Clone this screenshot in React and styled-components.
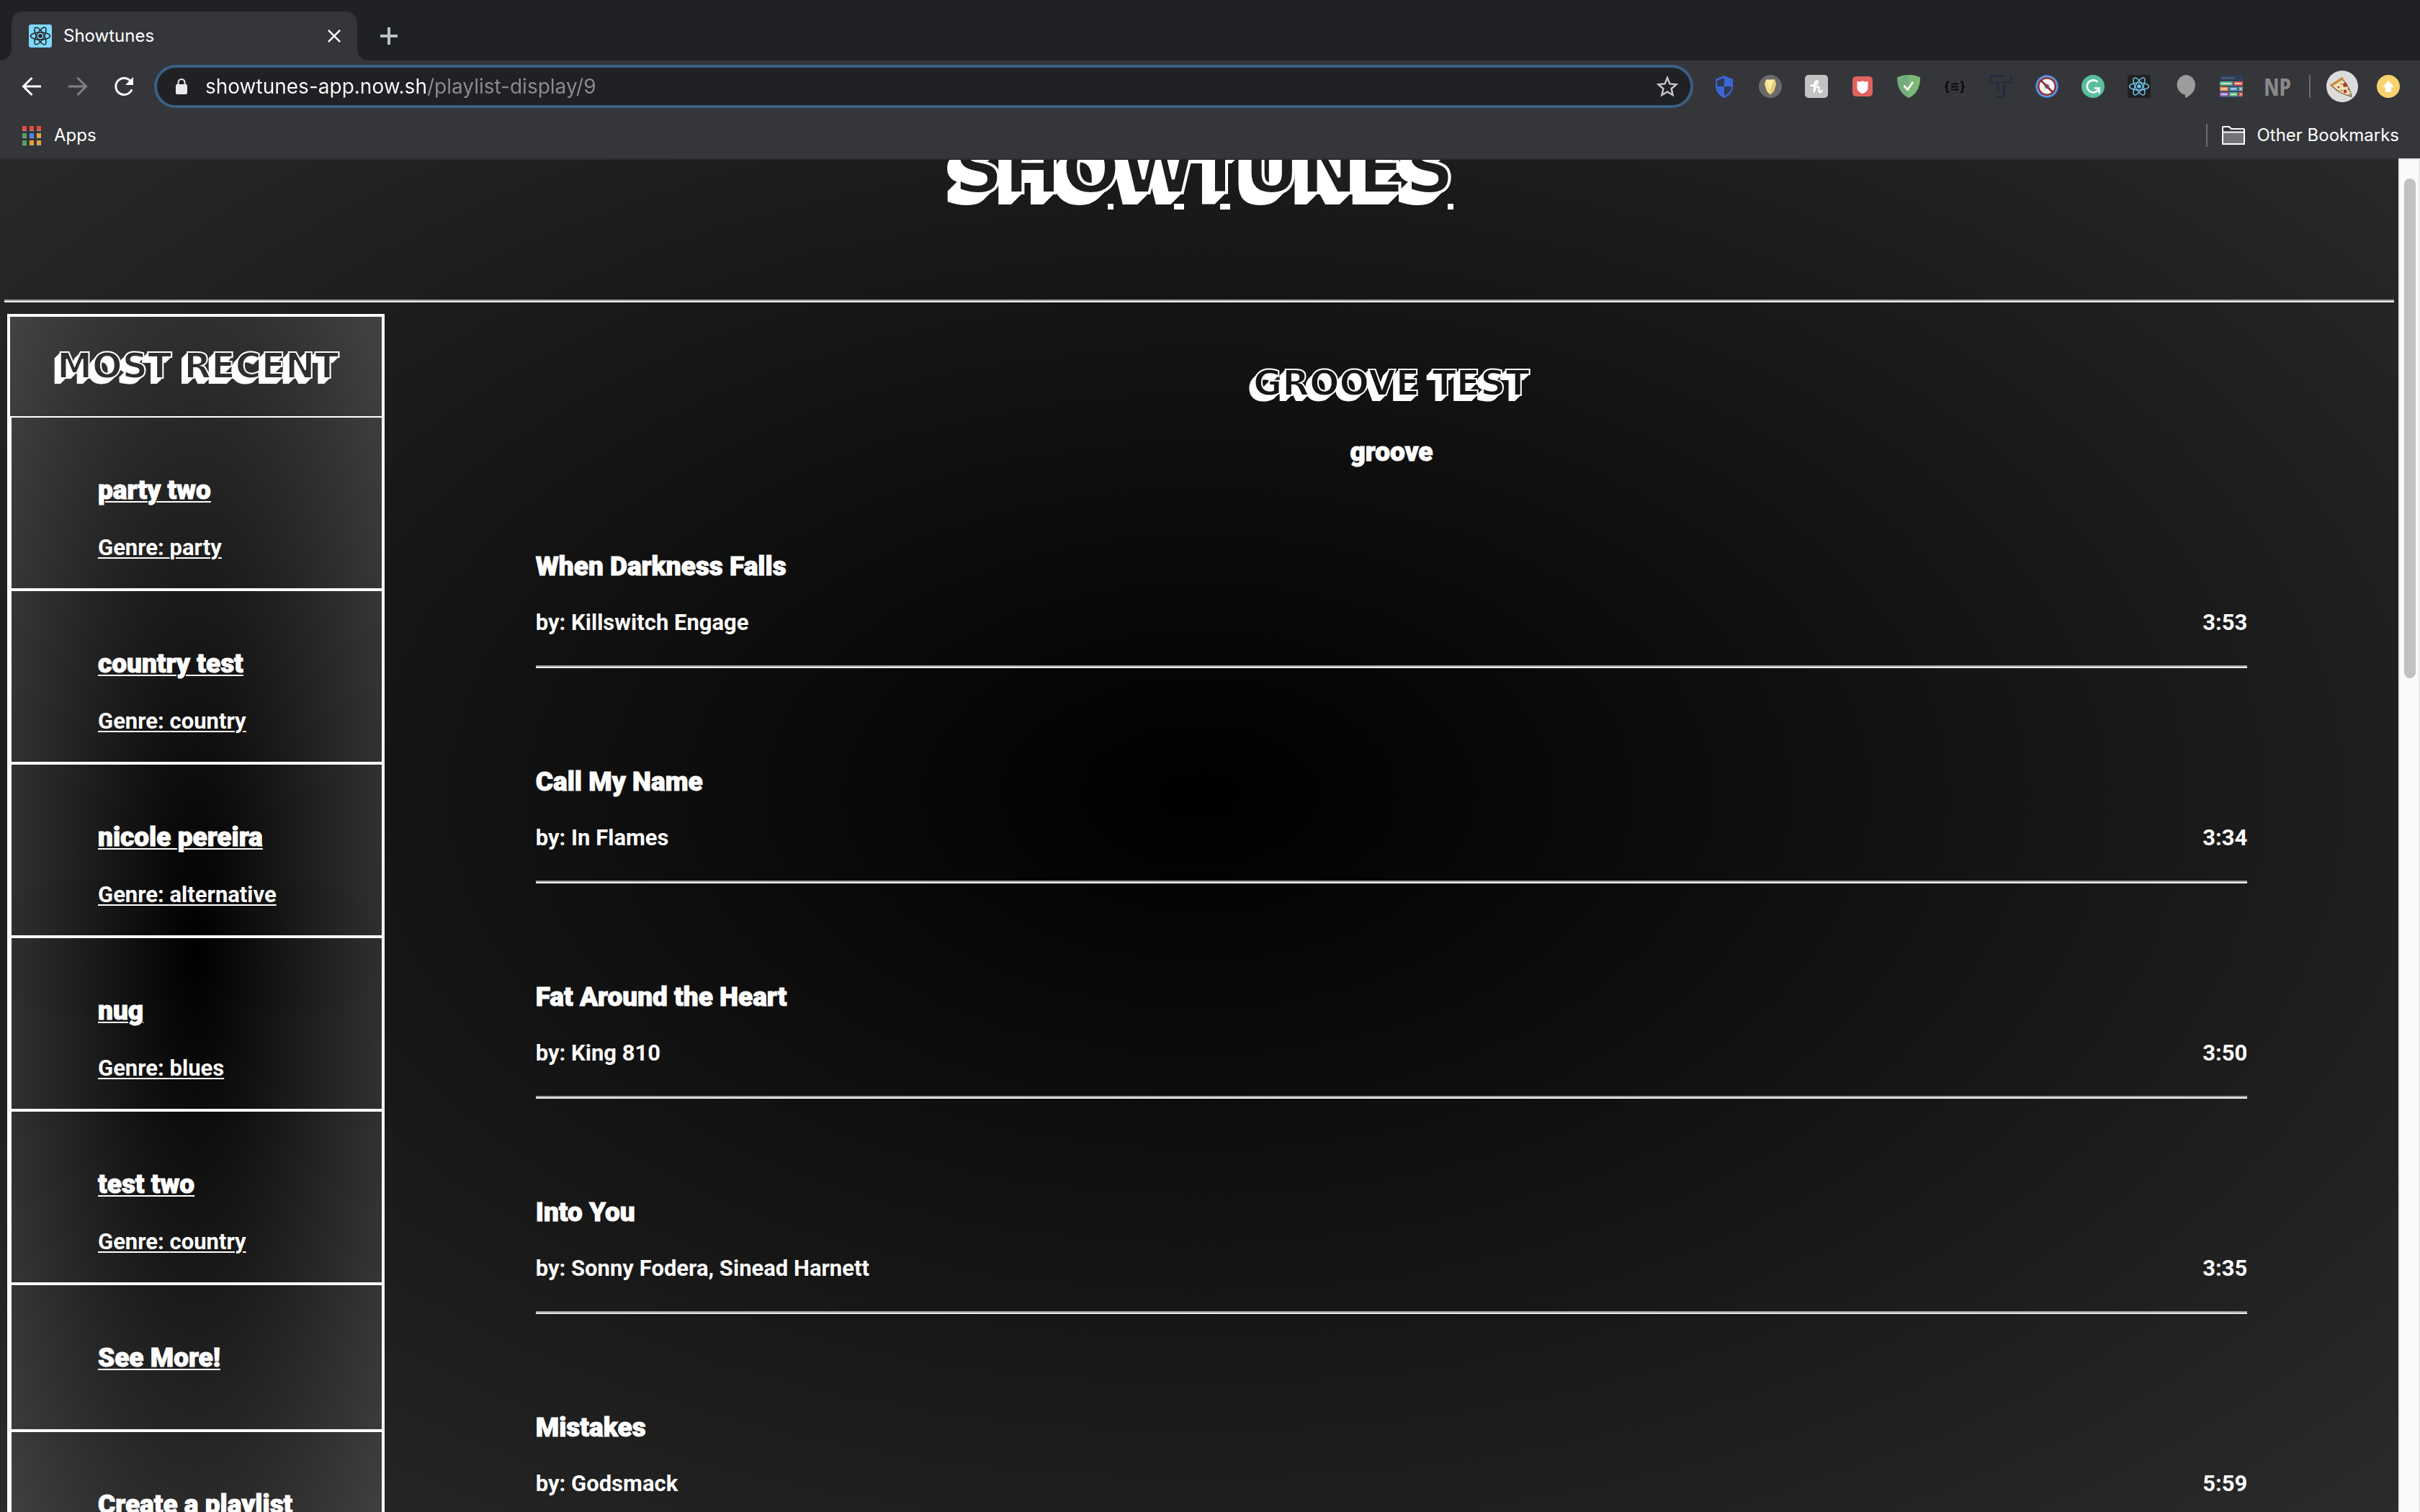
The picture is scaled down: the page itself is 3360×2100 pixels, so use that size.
import React from "react";
import styled, { createGlobalStyle } from "styled-components";

const Global = createGlobalStyle`
  *, *::before, *::after { box-sizing: border-box; }
  body { margin: 0; background: #202124; }
  h1, h2, h3, h4, p, ul { margin: 0; padding: 0; }
  ul { list-style: none; }
  button { border: 0; padding: 0; background: none; font: inherit; color: inherit; }
`;

const Window = styled.div`
  height: 100vh;
  display: flex;
  flex-direction: column;
  overflow: hidden;
  font-family: Inter, "Liberation Sans", sans-serif;
  color: #fff;
`;

/* ---------- browser chrome ---------- */

const TabStrip = styled.div`
  display: flex;
  align-items: flex-end;
  height: 84px;
  padding-left: 16px;
  background: #202124;
`;

const Tab = styled.div`
  position: relative;
  display: flex;
  align-items: center;
  gap: 16px;
  width: 480px;
  height: 68px;
  padding: 0 22px 0 24px;
  border-radius: 16px 16px 0 0;
  background: #35363a;
  font-size: 24px;
  line-height: 32px;

  &::before,
  &::after {
    content: "";
    position: absolute;
    bottom: 0;
    width: 16px;
    height: 16px;
  }
  &::before {
    left: -16px;
    background: radial-gradient(circle at 0 0, transparent 16px, #35363a 16px);
  }
  &::after {
    right: -16px;
    background: radial-gradient(circle at 100% 0, transparent 16px, #35363a 16px);
  }
`;

const TabTitle = styled.span`
  flex: 1;
`;

const IconButton = styled.button`
  display: flex;
  align-items: center;
  justify-content: center;
  flex: none;
  width: ${(p) => p.$w || 32}px;
  height: ${(p) => p.$h || 32}px;
  color: ${(p) => p.$color || "#fff"};
`;

const NewTab = styled(IconButton)`
  width: 88px;
  height: 68px;
`;

const Toolbar = styled.div`
  display: flex;
  align-items: center;
  height: 72px;
  padding: 0 28px;
  background: #35363a;
`;

const NavButtons = styled.div`
  display: flex;
  gap: 32px;
  margin-right: 26px;
`;

const Omnibox = styled.div`
  flex: 1;
  display: flex;
  align-items: center;
  height: 60px;
  padding: 0 16px 0 25px;
  border: 4px solid #3a5f82;
  border-radius: 30px;
  background: #202124;
`;

const Address = styled.input`
  flex: 1;
  min-width: 0;
  height: 44px;
  margin-left: 24px;
  padding: 0;
  border: 0;
  outline: 0;
  font: 400 28px/44px Inter, "Liberation Sans", sans-serif;
  color: transparent;
  background: linear-gradient(90deg, #fff 308px, #8c8d90 308px);
  background-clip: text;
  -webkit-background-clip: text;
`;

const Extensions = styled.div`
  display: flex;
  align-items: center;
  gap: 32px;
  margin-left: 27px;
`;

const Badge = styled.span`
  color: ${(p) => p.$color};
  font: 700 34px/32px "Liberation Sans Narrow", "Open Sans Condensed", sans-serif;
`;

const Divider = styled.span`
  width: 2px;
  height: 32px;
  background: #6b6c70;
`;

const Profile = styled.div`
  display: flex;
  align-items: center;
  gap: 26px;
  margin-left: 22px;
`;

const ExtensionsEnd = styled(Divider)`
  margin-left: 28px;
`;

const Bookmarks = styled.div`
  display: flex;
  align-items: center;
  justify-content: space-between;
  height: 64px;
  padding: 0 29px 0 31px;
  background: #35363a;
  font-size: 24px;
  line-height: 32px;
`;

const Bookmark = styled.button`
  display: flex;
  align-items: center;
  gap: ${(p) => p.$gap}px;
`;

const OtherBookmarks = styled.div`
  display: flex;
  align-items: center;
  gap: 20px;
`;

/* ---------- page ---------- */

const Viewport = styled.div`
  flex: 1;
  min-height: 0;
  display: flex;
  overflow: hidden;
`;

const Page = styled.div`
  flex: 1;
  min-width: 0;
  overflow: hidden;
  border-top: 2px solid #2b2b2b;
  background: radial-gradient(at 50% 47%, #000, #2b2b2b);
  font-family: Roboto, "Liberation Sans", sans-serif;
`;

const ScrollTrack = styled.div`
  flex: none;
  width: 30px;
  padding: 26px 4px 0 6px;
  border: solid #e8e8e8;
  border-width: 2px 2px 0 2px;
  background: #fafafa;
`;

const ScrollThumb = styled.div`
  width: 16px;
  height: 694px;
  border-radius: 8px;
  background: #c1c1c1;
`;

const Header = styled.header`
  display: flex;
  flex-direction: column;
  align-items: center;
  justify-content: flex-end;
  height: 194px;
  padding-bottom: 125px;
  overflow: hidden;
`;

const steps = (n) =>
  Array.from({ length: n }, (_, i) => `-${i + 1}px ${i + 1}px 0 #fff`).join(", ");

/* The underline only shows as short dashes between the shaded letters. */
const dash = (x, w) => `linear-gradient(#fff, #fff) ${x}px 100% / ${w}px 8px no-repeat`;

const SiteTitle = styled.h1`
  padding: 0 0 0 14px;
  font: 700 96px/112px "DejaVu Sans", sans-serif;
  color: #1d1d1d;
  -webkit-text-stroke: 4px #fff;
  text-shadow: ${steps(16)};
  white-space: nowrap;
  background: ${dash(228, 8)}, ${dash(320, 14)}, ${dash(384, 14)}, ${dash(700, 8)};
`;

const Rule = styled.hr`
  height: 4px;
  margin: 0 ${(p) => p.$inset || 0}px;
  border: 0;
  border-top: 2px solid #9a9a9a;
  border-bottom: 2px solid #eee;
`;

const Columns = styled.div`
  display: flex;
  align-items: flex-start;
  padding: 16px 0 0 10px;
`;

const Sidebar = styled.nav`
  flex: none;
  width: 524px;
  border: 4px solid #fff;
  background: radial-gradient(#000, #434343);
`;

const ShadeHeading = styled.h2`
  font: 700 49px/56px "DejaVu Sans", sans-serif;
  color: ${(p) => p.$face};
  -webkit-text-stroke: 2px #fff;
  text-shadow: ${steps(8)};
  text-align: center;
  white-space: nowrap;
`;

const SidebarHead = styled.div`
  padding: 41px 0 41px 6px;
  border-bottom: 2px solid #fff;
`;

const Card = styled.a`
  display: block;
  padding: 79px 16px ${(p) => (p.$single ? 77 : 37)}px 120px;
  border-left: 2px solid #fff;
  border-bottom: 4px solid #fff;
  color: #fff;
  text-decoration: none;
`;

const Name = styled.h3`
  font-size: 37px;
  line-height: 44px;
  font-weight: 900;
  -webkit-text-stroke: 1px #fff;
  text-decoration: ${(p) => (p.$link ? "underline 2px" : "none")};
  text-underline-offset: 3px;
`;

const Detail = styled.p`
  margin-top: ${(p) => (p.$link ? 40 : 38)}px;
  margin-bottom: ${(p) => (p.$link ? 1 : 0)}px;
  display: flex;
  justify-content: space-between;
  font-size: 31px;
  line-height: 36px;
  font-weight: 700;
  text-decoration: ${(p) => (p.$link ? "underline 2px" : "none")};
  text-underline-offset: 3px;
`;

const Main = styled.main`
  flex: 1;
  padding-top: 69px;
`;

const Genre = styled(Name)`
  margin-top: 45px;
  text-align: center;
`;

const Songs = styled.ul`
  width: 85%;
  margin: 115px auto 0;
`;

const Song = styled.li`
  margin-bottom: 136px;

  ${Rule} {
    margin-top: 41px;
  }
`;

/* ---------- icons ---------- */

const Atom = ({ size = 32, bg, stroke, r = 3 }) => (
  <svg width={size} height={size} viewBox="0 0 32 32">
    <rect width="32" height="32" rx={r} fill={bg} />
    <g fill="none" stroke={stroke} strokeWidth="1.5">
      <ellipse cx="16" cy="16" rx="13.5" ry="5" />
      <ellipse cx="16" cy="16" rx="13.5" ry="5" transform="rotate(60 16 16)" />
      <ellipse cx="16" cy="16" rx="13.5" ry="5" transform="rotate(120 16 16)" />
    </g>
    <circle cx="16" cy="16" r="2.7" fill={stroke} />
  </svg>
);

const Stroke = ({ d, size = 32, w = 3, children }) => (
  <svg width={size} height={size} viewBox="0 0 32 32" fill="none" stroke="currentColor" strokeWidth={w}>
    {d && <path d={d} />}
    {children}
  </svg>
);

const Reload = () => (
  <Stroke>
    <path d="M27 20.2A11.500 11.500 0 1 1 25 8.500" />
    <path d="M29 3v11H18z" fill="currentColor" stroke="none" />
  </Stroke>
);

const Lock = () => (
  <svg width="18" height="22" viewBox="0 0 18 22">
    <rect x="1" y="8" width="16" height="14" rx="2" fill="#e8eaed" />
    <path d="M4.500 9V5.500a4.500 4.500 0 0 1 9 0V9" fill="none" stroke="#e8eaed" strokeWidth="2" />
  </svg>
);

const Star = () => (
  <svg width="32" height="32" viewBox="0 0 32 32">
    <path d="M16 4l3.400 8.400 9 .8-6.800 6 2 8.800L16 23.400 8.400 28l2-8.800-6.800-6 9-.8z" fill="none" stroke="#c4c5c7" strokeWidth="2.500" />
  </svg>
);

const BlueShield = () => (
  <svg width="32" height="32" viewBox="0 0 32 32">
    <path d="M16 1l12 5v10c0 7-5 13-12 16C9 29 4 23 4 16V6z" fill="#3b67d6" />
    <path d="M16 4v12H6V8zM16 16h10c0 6-4 10.500-10 13z" fill="#303a52" />
  </svg>
);

const Bulb = () => (
  <svg width="32" height="32" viewBox="0 0 32 32">
    <circle cx="16" cy="16" r="16" fill="#6a6a6a" />
    <path d="M10 6.500h12l2 6-3 10-5 5-5-5-3-10z" fill="#f6e08b" />
    <path d="M16 6.500h6l2 6-3 10-5 5z" fill="#e3cb78" />
    <path d="M11 7l5 14 5-14z" fill="#fbeeae" />
  </svg>
);

const HoneyBadge = () => (
  <svg width="32" height="32" viewBox="0 0 32 32">
    <rect width="32" height="32" rx="5" fill="#c3c3c3" />
    <path d="M8.500 15c5 0 10-2.500 9.500-5.500-.5-2-4-1.500-4.500 3L12.500 24.500c1-5.500 3-8.500 5.500-8.500 3.500 0-.5 8 2.500 8 1.500 0 2.500-.8 3-2" fill="none" stroke="#fff" strokeWidth="2.300" strokeLinecap="round" />
  </svg>
);

const RedShield = () => (
  <svg width="32" height="32" viewBox="0 0 32 32">
    <rect x="2" y="2" width="28" height="28" rx="5" fill="#e0625f" />
    <path d="M8.500 9c3 .8 5.500.5 7.500-.8 2 1.300 4.500 1.600 7.500.8v9c0 4-3.500 6.500-7.500 8-4-1.500-7.500-4-7.500-8z" fill="#fff" />
  </svg>
);

const GreenShield = () => (
  <svg width="32" height="32" viewBox="0 0 32 32">
    <path d="M16 0c5 0 11 1 16 3.500C32 17 27 26.500 16 32 5 26.500 0 17 0 3.500 5 1 11 0 16 0z" fill="#74ac7c" />
    <path d="M16 0c5 0 11 1 16 3.500C32 17 27 26.500 16 32z" fill="#7cb975" />
    <path d="M9.500 15l5 5.500L22 10" fill="none" stroke="#fff" strokeWidth="2.800" />
  </svg>
);

const Braces = () => (
  <svg width="32" height="32" viewBox="0 0 32 32" fill="none" stroke="#050505" strokeWidth="2">
    <path d="M8 9.500H7q-2 0-2 2V14q0 2-2 2.500 2 .5 2 2.500v3q0 2 2 2h1M24 9.500h1q2 0 2 2V14q0 2 2 2.500-2 .5-2 2.500v3q0 2-2 2h-1" />
    <path d="M11 12.500h10M11 16.500h10M11 20.500h10" strokeWidth="1.500" />
    <path d="M18 11v3M14 15v3M18 19v3" strokeWidth="1.500" />
  </svg>
);

const TeeLogo = () => (
  <svg width="32" height="32" viewBox="0 0 32 32" fill="none" stroke="#222c40" strokeWidth="2.400">
    <path d="M23 1.200H1.200v10h11v12M30.800 0v10H20v20.800H10M9 11.200" />
    <path d="M30.800 10.800H22v20M16 8v2" strokeWidth="1" />
  </svg>
);

const Blocked = () => (
  <svg width="32" height="32" viewBox="0 0 32 32">
    <circle cx="16" cy="16" r="14.500" fill="#fff" stroke="#4a90e8" strokeWidth="2.500" />
    <circle cx="16" cy="16" r="11.800" fill="#f3f3f3" stroke="#8c2b2f" strokeWidth="2.500" />
    <circle cx="16" cy="16" r="3.500" fill="#8b9099" />
    <path d="M7.500 7.500l17 17" stroke="#8c2b2f" strokeWidth="2.500" />
  </svg>
);

const GreenSwirl = () => (
  <svg width="32" height="32" viewBox="0 0 32 32">
    <circle cx="16" cy="16" r="16" fill="#5abf9c" />
    <path d="M22.500 10A8.500 8.500 0 1 0 24 19.500" fill="none" stroke="#fff" strokeWidth="2.600" />
    <path d="M17.500 18.500h7.200v7" fill="none" stroke="#fff" strokeWidth="2.600" />
  </svg>
);

const Speech = () => (
  <svg width="32" height="32" viewBox="0 0 32 32">
    <path d="M16 0a14 14 0 0 1 14 14c0 8-6 15-14 18v-4.500A14 14 0 0 1 16 0z" fill="#9c9c9c" />
  </svg>
);

const ROWS = [
  [["#5fae80", 0, 18], ["#d15b52", 19, 13]],
  [["#e08c4a", 0, 12], ["#4f87bb", 13, 12], ["#8795a5", 26, 6]],
  [["#9167b8", 0, 12], ["#5fae80", 13, 12], ["#d15b52", 26, 6]],
];

const Blocks = () => (
  <svg width="32" height="32" viewBox="0 0 32 32">
    <rect width="32" height="32" fill="#2d3e5b" />
    <path d="M2 4.500h18" stroke="#566074" strokeWidth="2" />
    {ROWS.map((row, i) =>
      row.map(([c, x, w]) => (
        <g key={`${i}-${x}`}>
          <rect x={x} y={9 + i * 7.5} width={w} height="6" fill={c} />
          <rect x={x + 2} y={11 + i * 7.5} width={w - 4} height="2" fill="#fff" opacity=".65" />
        </g>
      ))
    )}
  </svg>
);

const Pizza = () => (
  <svg width="44" height="44" viewBox="0 0 44 44">
    <circle cx="22" cy="22" r="22" fill="#dcdcdc" />
    <path d="M7 20L21 11c7 6 12 16 14 25C24 34 13 28 7 20z" fill="#f1e3b8" stroke="#8a5a2b" strokeWidth="1.300" />
    <path d="M7 20.500L22 11" stroke="#c98a45" strokeWidth="3.500" strokeLinecap="round" />
    <circle cx="26" cy="20" r="3" fill="#b13a32" />
    <circle cx="26" cy="29" r="2.400" fill="#b13a32" />
    <circle cx="17" cy="23" r="1.500" fill="#b13a32" />
    <path d="M20 18l2 1M30 25l1 2M20 27l2 1M31 33l1 1" stroke="#557a35" strokeWidth="1.400" />
  </svg>
);

const Update = () => (
  <svg width="32" height="32" viewBox="0 0 32 32">
    <circle cx="16" cy="16" r="16" fill="#f7d26f" />
    <path d="M16 8l8 9h-4v7h-8v-7H8z" fill="#fff" />
  </svg>
);

const GRID = ["#e8483b", "#e8483b", "#e8483b", "#549d62", "#4285ee", "#e9a33a", "#549d62", "#e9a33a", "#e9a33a"];

const AppsGrid = () => (
  <svg width="26" height="27" viewBox="0 0 26 27">
    {GRID.map((c, i) => (
      <g key={i}>
        <rect x={(i % 3) * 10} y={Math.floor(i / 3) * 10} width="6" height="7" fill="#9da0a3" />
        <rect x={(i % 3) * 10} y={Math.floor(i / 3) * 10} width="6" height="6" fill={c} />
      </g>
    ))}
  </svg>
);

const Folder = () => (
  <svg width="32" height="26" viewBox="0 0 32 26">
    <path d="M1 24V2q0-1 1-1h8l3 3h17q1 0 1 1v19q0 1-1 1H2q-1 0-1-1z" fill="#35363a" stroke="#fff" strokeWidth="2" />
    <path d="M1 8.500h30V25H1z" fill="#737477" stroke="#fff" strokeWidth="2" />
  </svg>
);

const EXTENSIONS = [
  ["Shield", <BlueShield />],
  ["Gold bulb", <Bulb />],
  ["Coupons", <HoneyBadge />],
  ["Blocker", <RedShield />],
  ["Guard", <GreenShield />],
  ["Formatter", <Braces />],
  ["Tee", <TeeLogo />],
  ["No script", <Blocked />],
  ["Grammar", <GreenSwirl />],
  ["React tools", <Atom bg="#202020" stroke="#6cc4ec" />],
  ["Comments", <Speech />],
  ["Blocks", <Blocks />],
];

/* ---------- data ---------- */

const PLAYLISTS = [
  ["party two", "party"],
  ["country test", "country"],
  ["nicole pereira", "alternative"],
  ["nug", "blues"],
  ["test two", "country"],
];

const SONGS = [
  ["When Darkness Falls", "Killswitch Engage", "3:53"],
  ["Call My Name", "In Flames", "3:34"],
  ["Fat Around the Heart", "King 810", "3:50"],
  ["Into You", "Sonny Fodera, Sinead Harnett", "3:35"],
  ["Mistakes", "Godsmack", "5:59"],
];

export default function App() {
  return (
    <Window>
      <Global />
      <TabStrip>
        <Tab>
          <Atom bg="#7fd8fb" stroke="#202428" />
          <TabTitle>Showtunes</TabTitle>
          <IconButton $w={20} aria-label="Close tab">
            <Stroke size={20} w={4} d="M3 3l26 26M29 3L3 29" />
          </IconButton>
        </Tab>
        <NewTab $color="#bdc1c6" aria-label="New tab">
          <Stroke w={4} d="M16 4v24M4 16h24" />
        </NewTab>
      </TabStrip>

      <Toolbar>
        <NavButtons>
          <IconButton aria-label="Back">
            <Stroke d="M29 16H5M16.500 4L4.500 16l12 12" />
          </IconButton>
          <IconButton aria-label="Forward" $color="#818285">
            <Stroke d="M3 16h24M15.500 4l12 12-12 12" />
          </IconButton>
          <IconButton aria-label="Reload">
            <Reload />
          </IconButton>
        </NavButtons>
        <Omnibox>
          <Lock />
          <Address aria-label="Address" defaultValue="showtunes-app.now.sh/playlist-display/9" />
          <IconButton aria-label="Bookmark this page">
            <Star />
          </IconButton>
        </Omnibox>
        <Extensions>
          {EXTENSIONS.map(([label, icon]) => (
            <IconButton key={label} aria-label={label}>
              {icon}
            </IconButton>
          ))}
          <IconButton aria-label="Notes">
            <Badge $color="#8a8a8a">NP</Badge>
          </IconButton>
        </Extensions>
        <ExtensionsEnd />
        <Profile>
          <IconButton $w={44} $h={44} aria-label="Profile">
            <Pizza />
          </IconButton>
          <IconButton aria-label="Update">
            <Update />
          </IconButton>
        </Profile>
      </Toolbar>

      <Bookmarks>
        <Bookmark $gap={18}>
          <AppsGrid />
          Apps
        </Bookmark>
        <OtherBookmarks>
          <Divider />
          <Bookmark $gap={16}>
            <Folder />
            Other Bookmarks
          </Bookmark>
        </OtherBookmarks>
      </Bookmarks>

      <Viewport>
        <Page>
          <Header>
            <SiteTitle>SHOWTUNES</SiteTitle>
          </Header>
          <Rule $inset={6} />
          <Columns>
            <Sidebar>
              <SidebarHead>
                <ShadeHeading $face="#2e2e2e">MOST RECENT</ShadeHeading>
              </SidebarHead>
              {PLAYLISTS.map(([name, genre]) => (
                <Card href="#playlist" key={name}>
                  <Name $link>{name}</Name>
                  <Detail $link>Genre: {genre}</Detail>
                </Card>
              ))}
              <Card href="#more" $single>
                <Name $link>See More!</Name>
              </Card>
              <Card href="#create" $single>
                <Name $link>Create a playlist</Name>
              </Card>
            </Sidebar>
            <Main>
              <ShadeHeading $face="#151515">GROOVE TEST</ShadeHeading>
              <Genre>groove</Genre>
              <Songs>
                {SONGS.map(([title, artist, time]) => (
                  <Song key={title}>
                    <Name>{title}</Name>
                    <Detail>
                      <span>by: {artist}</span>
                      <span>{time}</span>
                    </Detail>
                    <Rule />
                  </Song>
                ))}
              </Songs>
            </Main>
          </Columns>
        </Page>
        <ScrollTrack>
          <ScrollThumb />
        </ScrollTrack>
      </Viewport>
    </Window>
  );
}
